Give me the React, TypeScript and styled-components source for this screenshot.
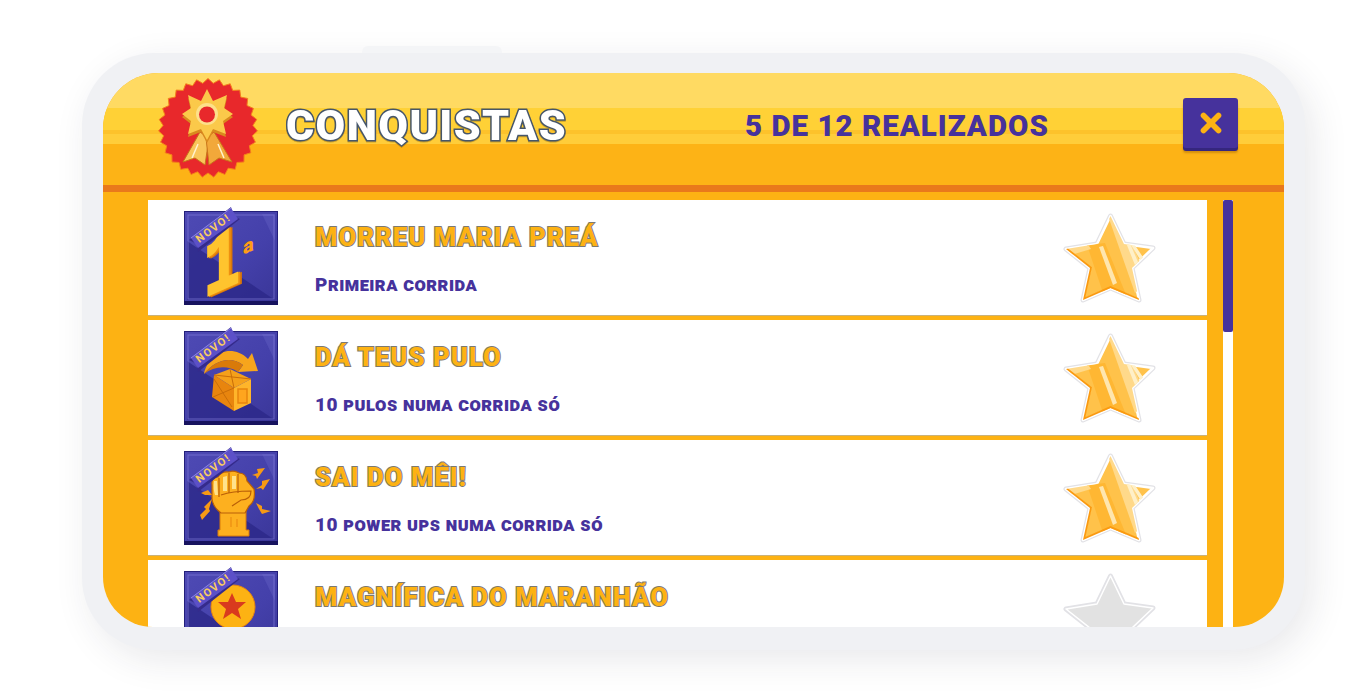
import React from "react";
import styled, { createGlobalStyle } from "styled-components";
import { X } from "lucide-react";

const GlobalStyle = createGlobalStyle`
  html, body {
    margin: 0;
    padding: 0;
    background: #fff;
    overflow: hidden;
  }
`;

const Page = styled.div`
  width: 1366px;
  height: 695px;
  box-sizing: border-box;
  padding: 53px 0 0 82px;
`;

const Phone = styled.div`
  position: relative;
  width: 1223px;
  height: 597px;
  box-sizing: border-box;
  padding: 20px 21px 23px;
  background: #f0f1f4;
  border-radius: 72px;
  box-shadow: 8px 10px 36px rgba(40, 40, 60, 0.1);

  &::before {
    content: "";
    position: absolute;
    top: -7px;
    left: 280px;
    width: 140px;
    height: 7px;
    background: #f4f5f7;
    border-radius: 6px 6px 0 0;
  }
`;

const Screen = styled.div`
  width: 100%;
  height: 100%;
  display: flex;
  flex-direction: column;
  overflow: hidden;
  background: #fdb213;
  border-radius: 56px 56px 50px 50px;
`;

const Header = styled.header`
  flex: none;
  height: 112px;
  display: flex;
  align-items: center;
  padding: 0 46px 0 55px;
  border-bottom: 7px solid #e9791b;
  background: linear-gradient(
    180deg,
    #ffda62 0 35px,
    #ffd136 35px 57px,
    #fdc22b 57px 61px,
    #ffcd3a 61px 71px,
    #fdb316 71px
  );
`;

const BadgeSvg = styled.svg`
  flex: none;
  width: 100px;
  height: 100px;
  margin-top: -2px;
`;

const HeaderTitle = styled.h1`
  margin: -7px 0 0 28px;
  width: 459px;
  flex: none;
  font: 900 43px/1 "Roboto", "Liberation Sans", sans-serif;
  letter-spacing: 1.4px;
  color: #fff;
  -webkit-text-stroke: 3px #46566a;
  paint-order: stroke fill;
  filter: drop-shadow(0 1px 0 rgba(120, 90, 20, 0.4));
`;

const Progress = styled.div`
  flex: 1;
  margin-top: -4px;
  font: 900 29.5px/1 "Roboto", "Liberation Sans", sans-serif;
  letter-spacing: 1px;
  color: #46329c;
`;

const CloseButton = styled.button`
  flex: none;
  width: 55px;
  height: 50px;
  margin-top: -12px;
  padding: 0;
  display: flex;
  align-items: center;
  justify-content: center;
  border: 0;
  border-radius: 3px;
  color: #fdb213;
  background: #46329c;
  box-shadow: 0 3px 0 #35267e, 0 5px 2px rgba(150, 90, 0, 0.4);
`;

const Body = styled.div`
  flex: 1;
  min-height: 0;
  display: flex;
  gap: 16px;
  padding: 8px 0 0 45px;
`;

const List = styled.ul`
  width: 1059px;
  flex: none;
  margin: 0;
  padding: 0;
  list-style: none;
  display: flex;
  flex-direction: column;
  gap: 5px;
`;

const Row = styled.li`
  flex: none;
  height: 115px;
  box-sizing: border-box;
  display: flex;
  align-items: center;
  padding: 0 52px 0 36px;
  background: #fff;
  box-shadow: 0 1px 0 #c9b27a;
`;

const Tile = styled.svg`
  flex: none;
  width: 94px;
  height: 94px;
  overflow: visible;
`;

const RowText = styled.div`
  flex: 1;
  align-self: flex-start;
  margin: 22px 0 0 37px;
  display: flex;
  flex-direction: column;
  gap: 23px;
`;

const RowTitle = styled.div`
  font: 900 25.5px/30px "Roboto", "Liberation Sans", sans-serif;
  letter-spacing: 1.15px;
  color: #fdb213;
  -webkit-text-stroke: 2px #7d7a70;
  paint-order: stroke fill;
`;

const RowSub = styled.div`
  font: 900 19px/20px "Roboto", "Liberation Sans", sans-serif;
  font-variant: small-caps;
  letter-spacing: 0.5px;
  color: #46329c;
`;

const StarSvg = styled.svg`
  flex: none;
  width: 90px;
  height: 90px;
  overflow: visible;
`;

const Scrollbar = styled.div`
  flex: none;
  width: 10px;
  background: #fff;
`;

const Thumb = styled.div`
  height: 132px;
  background: #46329c;
  border-radius: 2px;
`;

const achievements = [
  { title: "MORREU MARIA PREÁ", sub: "Primeira corrida", art: "first", done: true },
  { title: "DÁ TEUS PULO", sub: "10 pulos numa corrida só", art: "box", done: true },
  { title: "SAI DO MÊI!", sub: "10 power ups numa corrida só", art: "fist", done: true },
  { title: "MAGNÍFICA DO MARANHÃO", art: "ball", done: false },
];

const scallopPoints = (count: number, outer: number, inner: number) => {
  const pts: string[] = [];
  for (let i = 0; i < count * 2; i++) {
    const r = i % 2 === 0 ? outer : inner;
    const a = (Math.PI * i) / count;
    pts.push(`${(50 + r * Math.sin(a)).toFixed(2)},${(50 - r * Math.cos(a)).toFixed(2)}`);
  }
  return pts.join(" ");
};

const badgeStar =
  "49,11 55,23 69,17 66,30 75,36 65,43 68,56 55,51 49,62 43,51 30,56 33,43 24,36 33,30 30,17 43,23";

const Badge = () => (
  <BadgeSvg viewBox="0 0 100 100">
    <polygon
      points={scallopPoints(27, 49.5, 45)}
      fill="#e8282b"
      stroke="#f4801c"
      strokeWidth="1"
      strokeLinejoin="round"
    />
    <path d="M42 54 L25 84 L37 80 L47 87 L51 60 Z" fill="#f9c65a" stroke="#c8741a" strokeWidth="1" />
    <path d="M56 54 L74 84 L61 80 L51 87 L48 60 Z" fill="#f2a83a" stroke="#c8741a" strokeWidth="1" />
    <path d="M40 66 L34 80 M60 66 L66 80" stroke="#fff3cf" strokeWidth="1.5" />
    <polygon points={badgeStar} fill="#d98a1e" transform="translate(0 3)" />
    <polygon points={badgeStar} fill="#fbc94a" />
    <circle cx="49" cy="36" r="11" fill="#fde08a" />
    <circle cx="49" cy="36.5" r="8" fill="#e8282b" />
  </BadgeSvg>
);

const FirstArt = () => (
  <g fontWeight="700">
    <g
      fontFamily="'Liberation Mono', monospace"
      fontSize="88"
      transform="translate(20 86) skewY(-24) scale(0.68 1)"
    >
      <text x="5" y="2" fill="#d9760a" stroke="#d9760a" strokeWidth="3">1</text>
      <text x="2.5" y="1" fill="#ee9010" stroke="#ee9010" strokeWidth="3">1</text>
      <text fill="#ffc42e" stroke="#ffc42e" strokeWidth="2.5">1</text>
    </g>
    <text
      x="59"
      y="70"
      fontSize="20"
      fontWeight="900"
      fontFamily="Roboto, sans-serif"
      fill="#ff9d14"
      transform="skewY(-24)"
    >
      a
    </text>
  </g>
);

const BoxArt = () => (
  <g>
    <path d="M20 43 C24 22 48 12 64 28 L68 22 L74 40 L54 41 L59 34 C46 24 30 30 20 43 Z" fill="#f7a51c" />
    <path d="M20 43 C30 30 46 24 59 34 L54 41 C44 34 30 35 20 43 Z" fill="#d97a0a" />
    <polygon points="30,44 46,38 67,48 50,57" fill="#f5a01a" />
    <polygon points="30,44 50,57 50,80 28,66" fill="#e8850e" />
    <polygon points="50,57 67,48 67,72 50,80" fill="#ffb52a" />
    <path d="M30 44 L67 48 M46 38 L50 57 M29 66 L50 57 M30 48 L48 76" stroke="#c96d08" strokeWidth="1" fill="none" />
    <rect x="54" y="58" width="9" height="14" fill="#ffa51e" stroke="#e8850e" strokeWidth="1.5" />
  </g>
);

const FistArt = () => (
  <g>
    <path d="M36 58 H62 V79 H65 V85 H34 V79 H36 Z" fill="#fdb01f" stroke="#d87a0a" strokeWidth="1" />
    <path d="M28 34 Q27 26 34 26 Q37 20 45 21 Q50 19 55 22 Q62 22 63 30 L70 38 Q72 50 65 55 L61 62 H37 Q29 56 28 48 Z" fill="#fdb01f" stroke="#b95f08" strokeWidth="1.2" />
    <path d="M35 27 V46 M45 22 V42 M54 23 V42" stroke="#b95f08" strokeWidth="1.2" fill="none" />
    <path d="M37 44 Q48 40 67 40 Q67 49 57 49 L48 55" stroke="#b95f08" strokeWidth="1.2" fill="none" />
    <path d="M30 30 Q29 38 31 44 L34 44 L33 30 Z M39 26 L39 40 L43 40 L43 25 Z M48 25 L48 38 L52 38 L52 25 Z" fill="#ffe28a" />
    <path d="M47 66 V76 M53 68 V76" stroke="#e8850e" strokeWidth="1" />
    <g fill="#f79a14">
      <polygon points="68,24 74,22 73,18 81,17 73,28 72,25" />
      <polygon points="72,38 78,34 78,30 86,28 79,39 77,37" />
      <polygon points="72,52 78,55 78,58 87,60 78,63 75,58" />
      <polygon points="16,64 22,58 20,56 28,48 25,58 26,60 18,69" />
      <polygon points="17,42 24,39 28,44 21,44" />
    </g>
  </g>
);

const BallArt = () => (
  <g>
    <circle cx="49" cy="36" r="22" fill="#fdb213" stroke="#e8850e" strokeWidth="1" />
    <polygon
      points="48,22 52,31 62,31 54,38 57,48 48,42 39,48 42,38 34,31 44,31"
      fill="#d93a1e"
    />
  </g>
);

const artByName: Record<string, React.FC> = {
  first: FirstArt,
  box: BoxArt,
  fist: FistArt,
  ball: BallArt,
};

const AchievementTile = ({ art, id }: { art: string; id: string }) => {
  const Art = artByName[art];
  return (
    <Tile viewBox="0 0 94 94">
      <defs>
        <linearGradient id={id} x1="0" y1="0" x2="1" y2="1">
          <stop offset="0" stopColor="#4e4ab4" />
          <stop offset="0.6" stopColor="#4440aa" />
          <stop offset="1" stopColor="#3a3698" />
        </linearGradient>
      </defs>
      <rect width="94" height="94" fill="#231f7a" />
      <rect x="1" y="1" width="92" height="90" fill={`url(#${id})`} />
      <polygon points="3,30 3,89 91,89" fill="#2c2888" opacity="0.8" />
      <polygon points="40,3 91,3 91,30 78,3" fill="#6a66c8" opacity="0.35" />
      <rect x="4" y="4" width="86" height="84" fill="none" stroke="#7d79d4" strokeWidth="1" opacity="0.7" />
      <rect y="90" width="94" height="4" fill="#17135f" />
      <Art />
      <polygon points="5,29 47,-4 49,5 56,8 14,41 13,33" fill="#352b8c" />
      <polygon points="7,27 47,-3 54,8 14,37" fill="#5c50c8" />
      <path d="M7 27 L47 -3" stroke="#8f86e6" strokeWidth="1" />
      <text
        x="29"
        y="21"
        textAnchor="middle"
        transform="rotate(-37 29 17)"
        fontFamily="Roboto, sans-serif"
        fontWeight="700"
        fontSize="11"
        letterSpacing="1.5"
        fill="#f8cc60"
      >
        NOVO!
      </text>
    </Tile>
  );
};

const StarShape = "M45.5 3 L59 31 L88 35 L67 55 L74 87 L45.5 75 L18 87 L25 55 L1 36 L32 31 Z";

const Star = ({ done, id }: { done: boolean; id: string }) => (
  <StarSvg viewBox="0 0 90 90">
    <defs>
      <clipPath id={id}>
        <path d={StarShape} />
      </clipPath>
    </defs>
    <path d={StarShape} fill="#e4e4e8" stroke="#e2e2e6" strokeWidth="5" strokeLinejoin="round" />
    {done ? (
      <>
        <path d={StarShape} fill="#ffc24a" stroke="#fff" strokeWidth="2.5" strokeLinejoin="round" />
        <g clipPath={`url(#${id})`}>
          <polygon points="42,0 52,0 84,68 70,80" fill="#ffd98a" />
          <polygon points="49,0 52,0 82,70 78,72" fill="#fff0c8" />
          <polygon points="56,16 59,16 90,62 86,64" fill="#fff0c8" />
          <polygon points="22,32 40,30 62,84 38,80" fill="#ffb733" />
          <polygon points="0,34 22,30 26,36 6,42" fill="#ffd98a" />
          <polygon points="34,34 38,33 52,70 48,72" fill="#ffe6ae" />
          <path d="M1 36 L25 55 L18 87 L45.5 75 L74 87" fill="none" stroke="#fb9a10" strokeWidth="3.5" />
        </g>
      </>
    ) : (
      <path d={StarShape} fill="#e2e2e2" stroke="#fff" strokeWidth="1.5" strokeLinejoin="round" />
    )}
  </StarSvg>
);

const App: React.FC = () => (
  <Page>
    <GlobalStyle />
    <Phone>
      <Screen>
        <Header>
          <Badge />
          <HeaderTitle>CONQUISTAS</HeaderTitle>
          <Progress>5 DE 12 REALIZADOS</Progress>
          <CloseButton aria-label="Fechar">
            <X size={30} strokeWidth={4.5} />
          </CloseButton>
        </Header>
        <Body>
          <List>
            {achievements.map((item, i) => (
              <Row key={item.title}>
                <AchievementTile art={item.art} id={`tile-${i}`} />
                <RowText>
                  <RowTitle>{item.title}</RowTitle>
                  {item.sub && <RowSub>{item.sub}</RowSub>}
                </RowText>
                <Star done={item.done} id={`star-${i}`} />
              </Row>
            ))}
          </List>
          <Scrollbar>
            <Thumb />
          </Scrollbar>
        </Body>
      </Screen>
    </Phone>
  </Page>
);

export default App;
